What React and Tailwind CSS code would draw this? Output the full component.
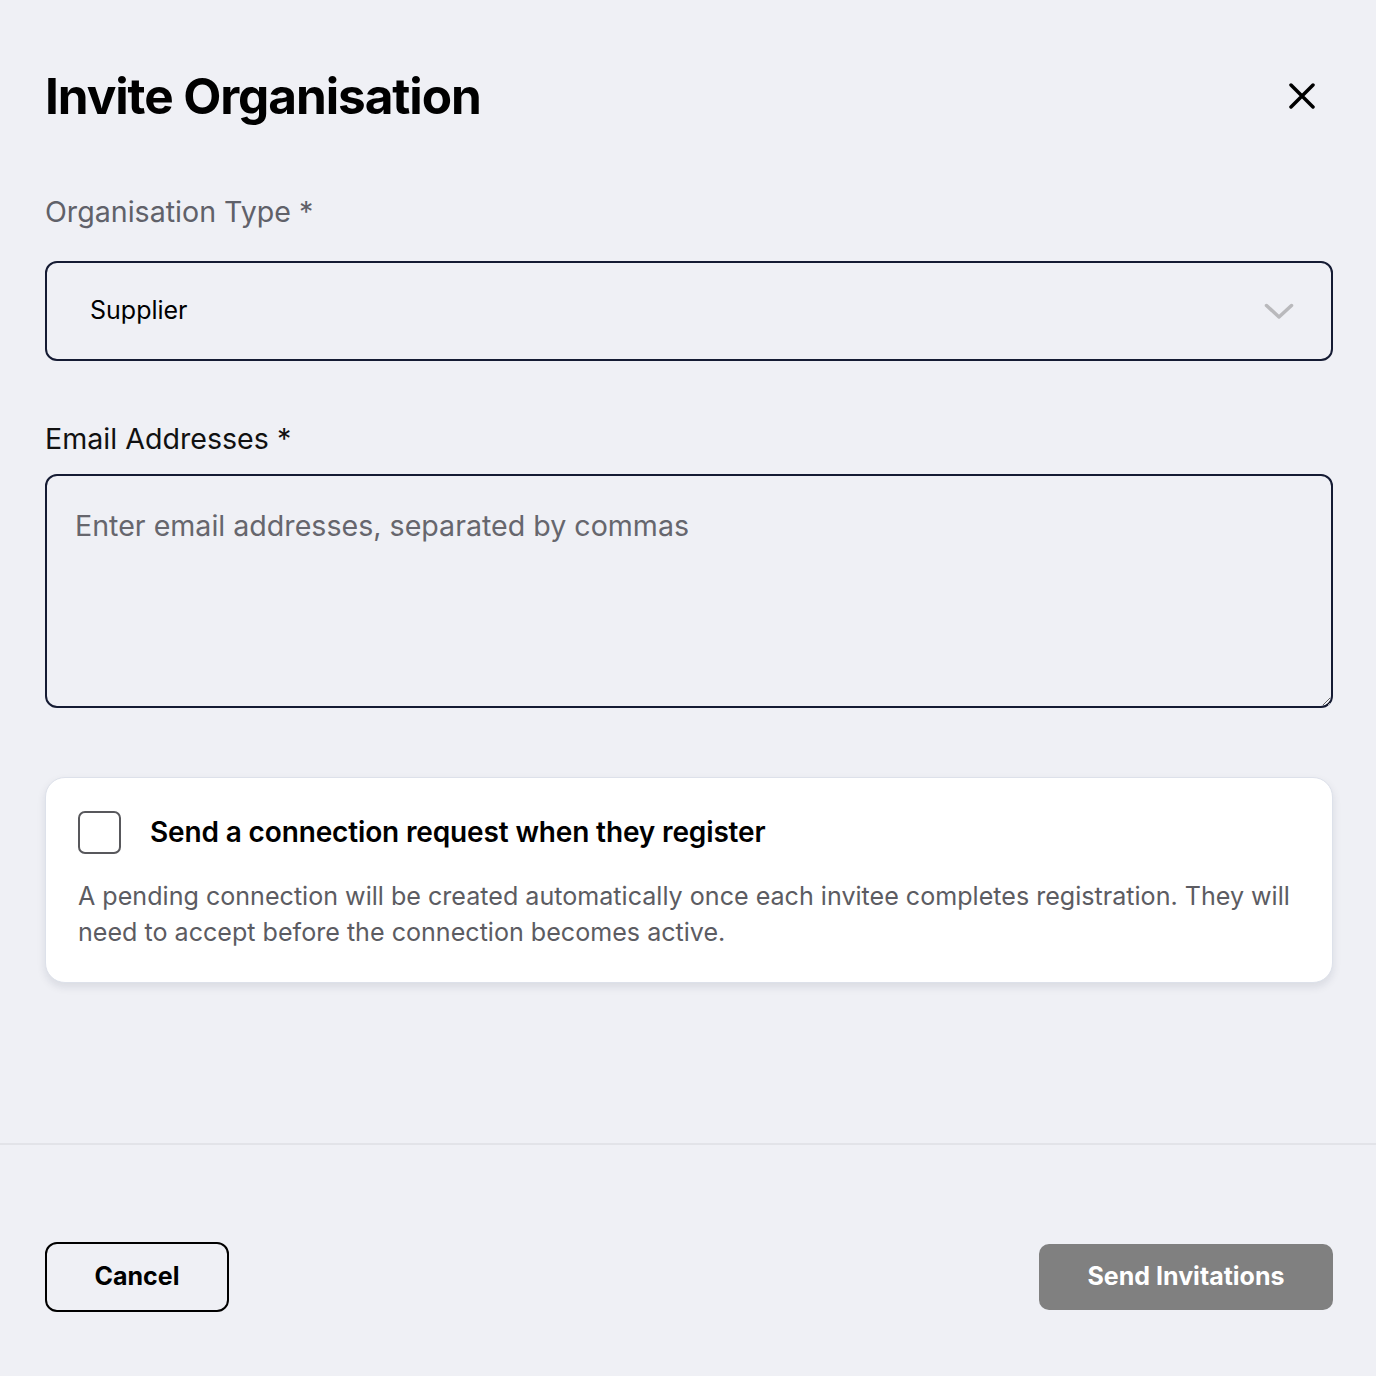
import { useState } from 'react';

// Invite organisation modal, full-page variant.
export default function App() {
  const [type] = useState('Supplier');
  const [emails, setEmails] = useState('');
  const [connect, setConnect] = useState(false);

  return (
    <div className="flex h-[1376px] w-full flex-col bg-[#eff0f5] font-[Inter,sans-serif] text-black">
      <div className="flex-1 pl-[45px] pr-[43px] pt-[64px]">
        <div className="flex items-center justify-between">
          <h1 className="text-[49.5px] font-bold leading-[64px] tracking-[-0.022em]">Invite Organisation</h1>
          <button className="mr-[17px] flex h-[28px] w-[28px] items-center justify-center" aria-label="Close">
            <svg width="26" height="26" viewBox="0 0 26 26" fill="none" stroke="#000" strokeWidth="3.5" strokeLinecap="round">
              <path d="M2 2L24 24M24 2L2 24" />
            </svg>
          </button>
        </div>

        <label className="mt-[66px] block text-[28.6px] leading-[36px] text-[#606169]">Organisation Type *</label>
        <button className="mt-[31px] flex h-[100px] w-full items-center justify-between rounded-[12px] border-2 border-[#151b33] pl-[43px] pr-[37px] text-left">
          <span className="text-[25px] text-black">{type}</span>
          <svg width="30" height="17" viewBox="0 0 30 17" fill="none" stroke="#b9b9bc" strokeWidth="3.5" strokeLinecap="round" strokeLinejoin="round">
            <path d="M2.5 2.5L15 14L27.5 2.5" />
          </svg>
        </button>

        <label className="mt-[60px] block text-[28.6px] leading-[36px] text-[#111]">Email Addresses *</label>
        <textarea
          value={emails}
          onChange={(e) => setEmails(e.target.value)}
          placeholder="Enter email addresses, separated by commas"
          className="mt-[17px] block h-[234px] w-full rounded-[12px] border-2 border-[#151b33] bg-transparent px-[28px] pt-[30px] text-[28.6px] leading-[40px] text-black outline-none placeholder:text-[#66666d]"
        />

        <div className="mt-[69px] rounded-[20px] border border-[#dde1ea] bg-white px-[32px] pb-[32px] pt-[32px] shadow-[0_4px_8px_rgba(20,30,60,0.10)]">
          <label className="flex items-center gap-[29px]">
            <button
              onClick={() => setConnect(!connect)}
              className={`h-[43px] w-[43px] shrink-0 rounded-[7px] border-2 ${connect ? 'border-black bg-black' : 'border-[#58585c] bg-white'}`}
              aria-label="Send a connection request"
            />
            <span className="text-[28px] font-semibold leading-[44px] tracking-[-0.005em]">Send a connection request when they register</span>
          </label>
          <p className="mt-[24px] text-[25.1px] leading-[36px] text-[#5c5c62]">
            A pending connection will be created automatically once each invitee completes registration. They will need to accept before the connection becomes active.
          </p>
        </div>
      </div>

      <div className="h-[2px] w-full bg-[#e2e3e8]" />

      <div className="flex h-[231px] items-start justify-between pl-[45px] pr-[43px] pt-[97px]">
        <button className="flex h-[70px] w-[184px] items-center justify-center rounded-[12px] border-2 border-black text-[25px] font-bold">
          Cancel
        </button>
        <button disabled className="mt-[2px] flex h-[66px] w-[294px] items-center justify-center rounded-[10px] bg-[#808080] text-[25px] font-bold text-white">
          Send Invitations
        </button>
      </div>
    </div>
  );
}
